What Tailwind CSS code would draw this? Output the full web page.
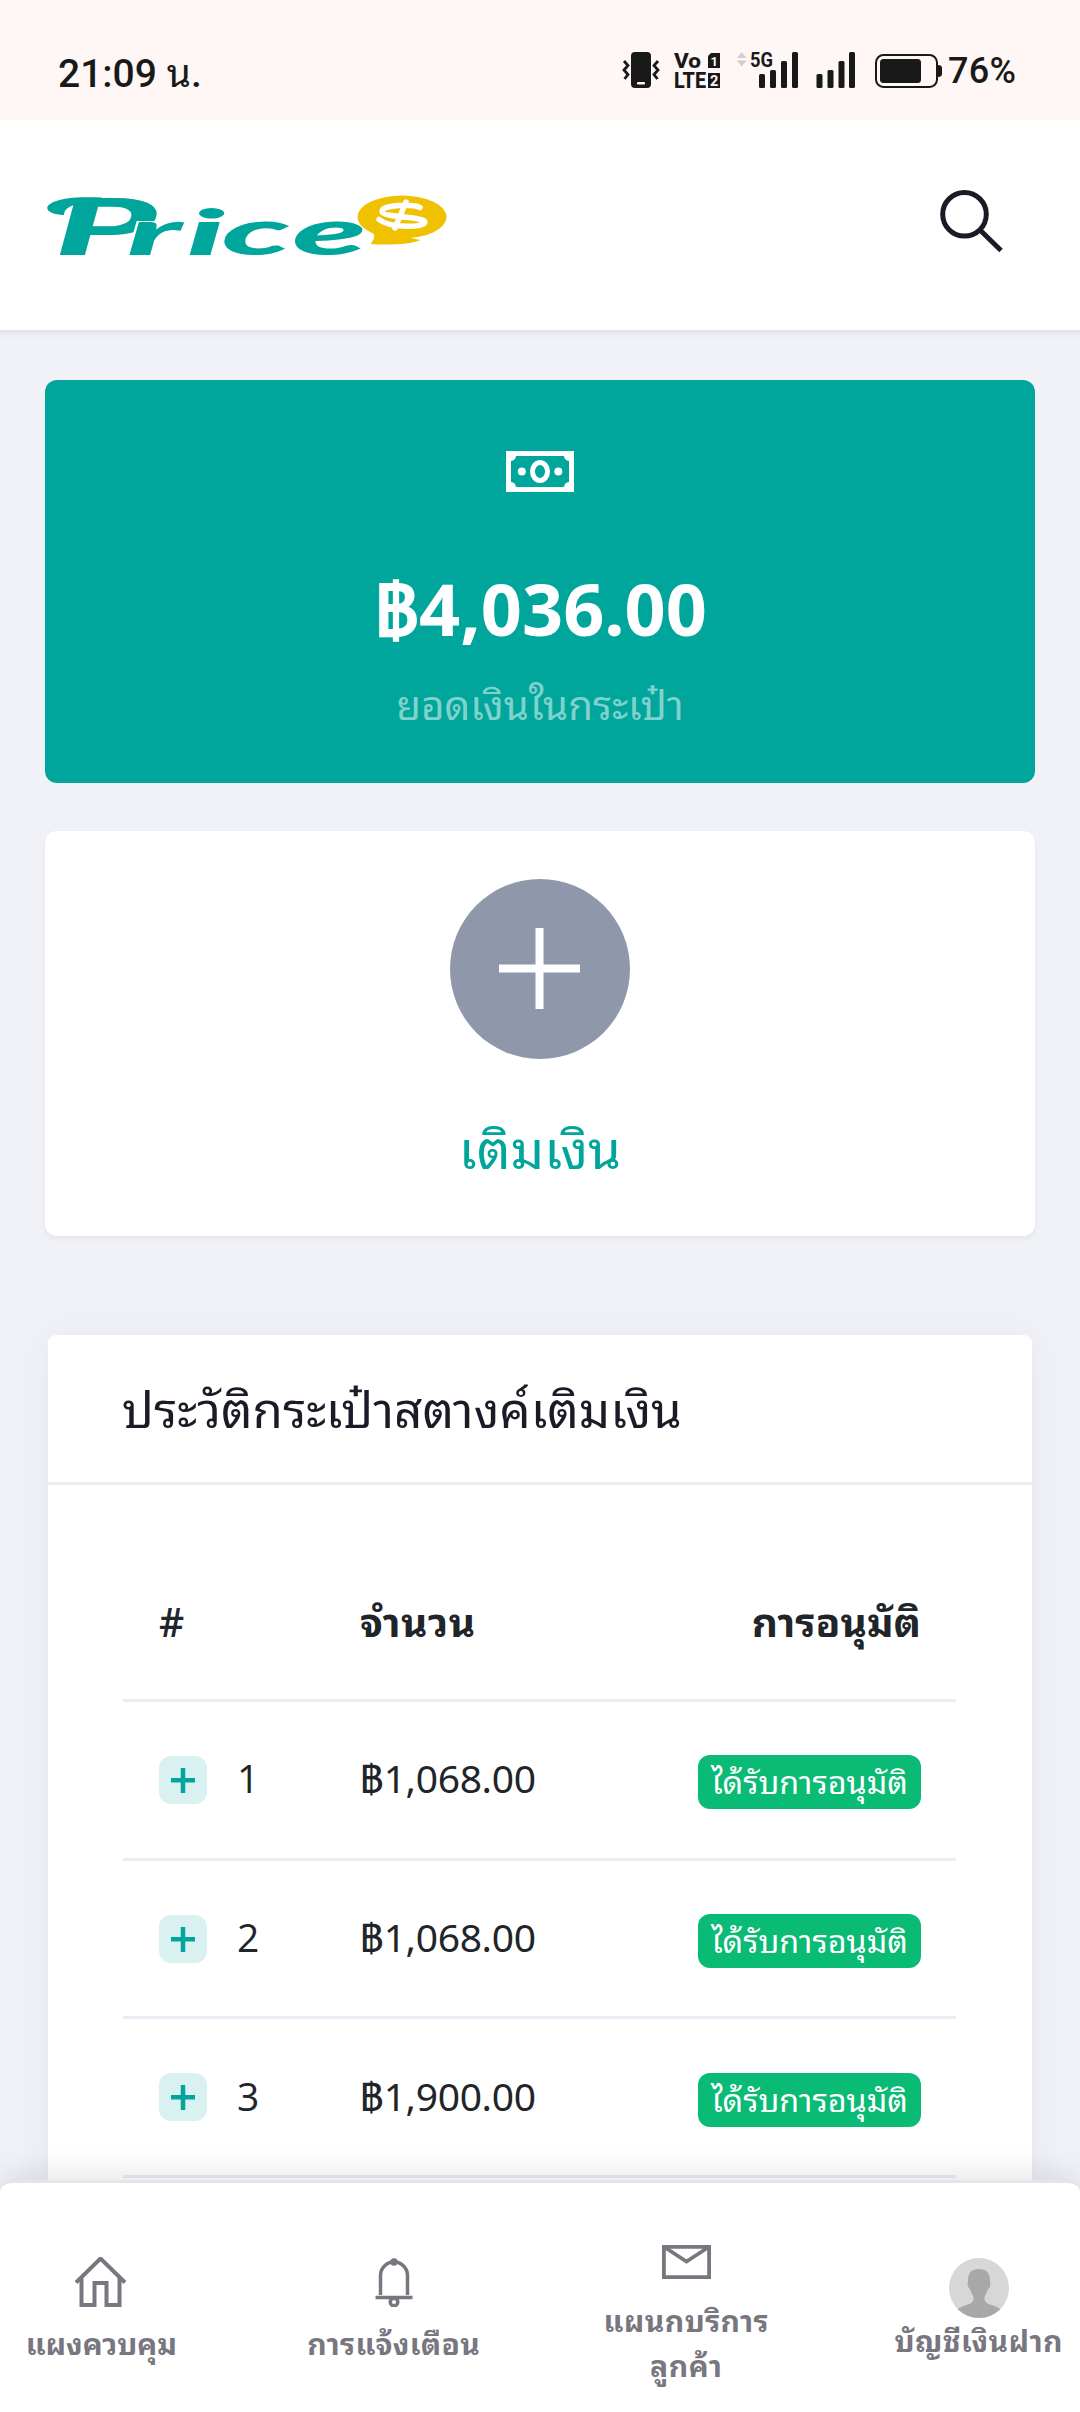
<!DOCTYPE html>
<html lang="th">
<head>
<meta charset="utf-8">
<meta name="viewport" content="width=device-width">
<title>Price</title>
<script src="https://cdn.jsdelivr.net/npm/@tailwindcss/browser@4"></script>
</head>
<body class="relative flex h-[2412px] w-[1080px] flex-col overflow-hidden bg-[#f0f2f7] font-['Open_Sans','Noto_Sans_Thai_Looped','Droid_Sans_Thai','Noto_Sans_Thai',sans-serif] text-[#212529]">

<!-- Status bar -->
<div class="flex h-[120px] shrink-0 items-start justify-between bg-[#fff7f5] pt-[50px] pl-[58px] text-[#191919]">
  <div class="pt-px font-[Roboto,'Noto_Sans_Thai_Looped','Droid_Sans_Thai',sans-serif] text-[39px] leading-[46px] font-medium whitespace-nowrap">21:09 <span class="font-normal">น</span>.</div>
  <svg class="h-[46px] w-[480px]" viewBox="600 50 480 46" fill="#191919">
    <rect x="631" y="52" width="20" height="36" rx="4"/>
    <rect x="637" y="82" width="8" height="2.5" rx="1" fill="#fff7f5"/>
    <path d="M624 61l4 4.500-4 4.500 4 4.500-3.500 4.500M658 61l-4 4.500 4 4.500-4 4.500 3.500 4.500" fill="none" stroke="#191919" stroke-width="2.800"/>
    <g font-family="Roboto, sans-serif" font-weight="700">
      <text x="674" y="67.500" font-size="21" font-weight="800" textLength="27" lengthAdjust="spacingAndGlyphs">Vo</text>
      <text x="674" y="88" font-size="21.500" font-weight="800" textLength="32" lengthAdjust="spacingAndGlyphs">LTE</text>
      <path d="M711 53h9v15h-12v-12z"/>
      <path d="M708 73h12v15h-12z"/>
      <text x="710.500" y="65.500" font-size="13" fill="#fff7f5">1</text>
      <text x="710" y="86" font-size="14.500" fill="#fff7f5">2</text>
      <text x="750" y="67" font-size="21" textLength="23" lengthAdjust="spacingAndGlyphs">5G</text>
    </g>
    <path d="M737 58l4.700-6 4.700 6zM737 60.500l4.700 6 4.700-6z" fill="#d3cccb"/>
    <g>
      <rect x="759" y="74" width="6" height="14" rx="1.500"/><rect x="770" y="70" width="6" height="18" rx="1.500"/><rect x="781" y="61" width="6" height="27" rx="1.500"/><rect x="792" y="52" width="6" height="36" rx="1.500"/>
      <rect x="816.500" y="74" width="6" height="14" rx="1.500"/><rect x="827.500" y="70" width="6" height="18" rx="1.500"/><rect x="838.500" y="61" width="6" height="27" rx="1.500"/><rect x="849" y="52" width="6" height="36" rx="1.500"/>
    </g>
    <rect x="876" y="55" width="61" height="32" rx="7.500" fill="none" stroke="#191919" stroke-width="2"/>
    <rect x="880" y="59" width="41" height="24" rx="3.500"/>
    <path d="M938 65q4 0 4 3v6q0 3-4 3z"/>
    <text x="948" y="83" font-family="Roboto, sans-serif" font-weight="500" font-size="36" textLength="68">76%</text>
  </svg>
</div>

<!-- App header -->
<header class="relative z-10 flex h-[210px] shrink-0 items-start justify-between bg-white shadow-[0_3px_0_#e2e4e9,0_4px_8px_rgba(30,40,90,0.06)]">
  <svg class="mt-[50px] ml-[45px] h-[110px] w-[405px]" viewBox="45 170 405 110">
    <g fill="#00a59b" font-family="Lato, sans-serif" font-weight="900" font-style="italic">
      <text transform="translate(54 254.500) scale(2.200 1)" x="0" y="0" font-size="79">P</text>
      <text transform="translate(127 254.500) scale(2.450 1)" x="0 24.300 38.600 67.500" y="0" font-size="62" stroke="#fff" stroke-width="2" paint-order="stroke">rice</text>
    </g>
    <path d="M64 215c-14 0-21-6-14-11 8-6 28-7.500 52-6.500v5c-18-1-38 2-38 12.500z" fill="#00a59b"/>
    <ellipse cx="402" cy="217" rx="44.500" ry="21.500" fill="#efc100"/>
    <path d="M366 229c9 4 11 7 4.500 15 18 1 38 1 50-4z" fill="#efc100"/>
    <path d="M420 207.500c-8-3.500-38-3-38 4 0 6 43 5 43 10.500 0 6-36 6-46-2.500M406 202l-11 26" fill="none" stroke="#fff" stroke-width="5.500" stroke-linecap="round"/>
  </svg>
  <svg class="mt-[65px] mr-[72px] h-[72px] w-[72px]" viewBox="936 185 72 72" fill="none" stroke="#1b1b28" stroke-width="5">
    <circle cx="964.500" cy="214.300" r="21.800"/><path d="M980.500 230.500L1001 250.500"/>
  </svg>
</header>

<main class="flex flex-col">
  <!-- Balance -->
  <section class="mx-[45px] mt-[50px] flex h-[403px] flex-col items-center rounded-xl bg-[#00a59b] pt-[71px] text-white">
    <svg class="h-[41px] w-[68px] shrink-0" viewBox="0 0 68 41">
      <path fill="#fff" fill-rule="evenodd" d="M0 0h68v41H0zM10 5a5.500 5.500 0 0 1-5 5v21a5.500 5.500 0 0 1 5 5h48a5.500 5.500 0 0 1 5-5V10a5.500 5.500 0 0 1-5-5z"/>
      <ellipse cx="34" cy="20.500" rx="7.500" ry="9" fill="none" stroke="#fff" stroke-width="5"/>
      <circle cx="15.800" cy="20.500" r="4" fill="#fff"/><circle cx="52.300" cy="20.500" r="4" fill="#fff"/>
    </svg>
    <div class="mt-[66px] pl-[2px] font-['Noto_Sans','Open_Sans',sans-serif] text-[72px] leading-[100px] font-bold whitespace-nowrap">฿4,036.00</div>
    <div class="mt-[17px] text-[40.300px] leading-[60px] whitespace-nowrap text-white/50">ยอดเงินในกระเป๋า</div>
  </section>

  <!-- Top up -->
  <section class="mx-[45px] mt-[48px] flex h-[405px] flex-col items-center rounded-xl bg-white pt-[48px] shadow-[0_3px_5px_rgba(30,40,60,0.06)]">
    <div class="grid size-[180px] shrink-0 place-items-center rounded-full bg-[#8f97ab]">
      <svg class="mr-px mb-[2px] size-[81px]" viewBox="0 0 81 81" stroke="#fff" stroke-width="8"><path d="M40.500 0v81M0 40.500h81"/></svg>
    </div>
    <div class="mt-[54px] text-[53px] leading-[72px] whitespace-nowrap text-[#00a59b]">เติมเงิน</div>
  </section>

  <!-- History -->
  <section class="mx-[48px] mt-[99px] h-[1100px] rounded-t-lg bg-white shadow-[0_0_36px_rgba(82,63,105,0.06)]">
    <h2 class="flex h-[150px] items-center border-b-[3px] border-[#ebedf2] pl-[74px] text-[49.400px] leading-[60px] whitespace-nowrap text-[#1b1b28]">ประวัติกระเป๋าสตางค์เติมเงิน</h2>
    <div class="mr-[76px] ml-[75px] pt-[76px]">
      <div class="flex h-[141px] items-center border-b-[3px] border-[#ebedf5] pr-[35px] pb-[17px] pl-[36px] text-[40.500px] leading-[60px] font-bold whitespace-nowrap">
        <div class="w-[201px] text-[39px] font-semibold">#</div><div class="flex-1 tracking-[0.5px]">จำนวน</div><div>การอนุมัติ</div>
      </div>
      <div id="rows" class="text-[39px] leading-[54px]"></div>
    </div>
  </section>
</main>

<template id="row">
  <div class="flex h-[158.700px] items-center border-b-[3px] border-[#ebedf5] pr-[35px] pl-[36px] whitespace-nowrap">
    <svg class="size-[48px]" viewBox="0 0 48 48"><rect width="48" height="48" rx="12" fill="#d9f1f0"/><path d="M24 12v25M12 24.200h24" stroke="#00a59b" stroke-width="4.500"/></svg>
    <div class="ml-[30px] w-[123px] pb-[3px]" data-n></div>
    <div class="flex-1 pb-[3px] font-['Noto_Sans','Open_Sans',sans-serif] tracking-[-0.350px]" data-amount></div>
    <div class="mt-[5px] h-[54px] w-[223px] rounded-xl bg-[#0abb75] text-center text-[32.300px] leading-[52px] text-white">ได้รับการอนุมัติ</div>
  </div>
</template>
<script>
  [['1', '฿1,068.00'], ['2', '฿1,068.00'], ['3', '฿1,900.00']].forEach(([n, amount]) => {
    const row = document.getElementById('row').content.cloneNode(true);
    row.querySelector('[data-n]').textContent = n;
    row.querySelector('[data-amount]').textContent = amount;
    document.getElementById('rows').append(row);
  });
</script>

<!-- Bottom navigation -->
<nav class="absolute inset-x-0 bottom-0 z-20 h-[232px] overflow-visible rounded-t-xl border-t-[3px] border-[#e2e5ec] bg-white shadow-[0_-3px_36px_rgba(0,0,0,0.12)]">
  <div class="-mx-[45px] grid h-full grid-cols-4 text-center text-[30px] leading-[45px] font-bold tracking-[0.4px] whitespace-nowrap text-[#78777f]">
    <div class="flex flex-col items-center pt-[74px]">
      <svg class="h-[50px] w-[52px]" viewBox="76 2257 52 50" fill="none" stroke="#78777f" stroke-width="4"><path d="M77 2283l24.500-24 24.500 24M82.500 2279v26.500h13v-22h12v22h13V2279" transform="translate(0 -.500)"/></svg>
      <div class="mt-[14px] tracking-[-0.1px]">แผงควบคุม</div>
    </div>
    <div class="flex flex-col items-center pt-[74px]">
      <svg class="h-[50px] w-[38px]" viewBox="0 0 38 50" fill="none" stroke="#78777f" stroke-width="3.500"><path d="M5.500 38V18.500a13.500 13.500 0 0 1 27 0V38"/><path d="M.5 40.500h37"/><circle cx="19" cy="45" r="3.800"/><circle cx="19" cy="5" r="3.700" fill="#78777f" stroke="none"/></svg>
      <div class="mt-[14px] tracking-[0.3px]">การแจ้งเตือน</div>
    </div>
    <div class="flex flex-col items-center pt-[62px]">
      <svg class="h-[34px] w-[49px]" viewBox="0 0 49 34" fill="none" stroke="#78777f" stroke-width="3.800"><path d="M1.900 1.900h45.200v30.200H1.900zM3 2.500l21.500 14L46 2.500"/></svg>
      <div class="mt-[19px]">แผนกบริการ<br>ลูกค้า</div>
    </div>
    <div class="flex flex-col items-center pt-[75px]">
      <svg class="size-[60px]" viewBox="0 0 60 60"><clipPath id="c"><circle cx="30" cy="30" r="30"/></clipPath><g clip-path="url(#c)"><path fill="#d7d7d7" d="M0 0h60v60H0z"/><path fill="#a8a8a8" d="M30 11c8 0 11.500 5 11 13 1 2 0 6-2 7-1 4-3 6-3.500 8 0 3 0 5 4 7 6 2 10 3 12.500 6V60H8v-8c2.500-3 6.500-4 12.500-6 4-2 4-4 4-7-.5-2-2.500-4-3.500-8-2-1-3-5-2-7-.5-8 3-13 11-13z"/></g></svg>
      <div>บัญชีเงินฝาก</div>
    </div>
  </div>
</nav>
</body>
</html>
